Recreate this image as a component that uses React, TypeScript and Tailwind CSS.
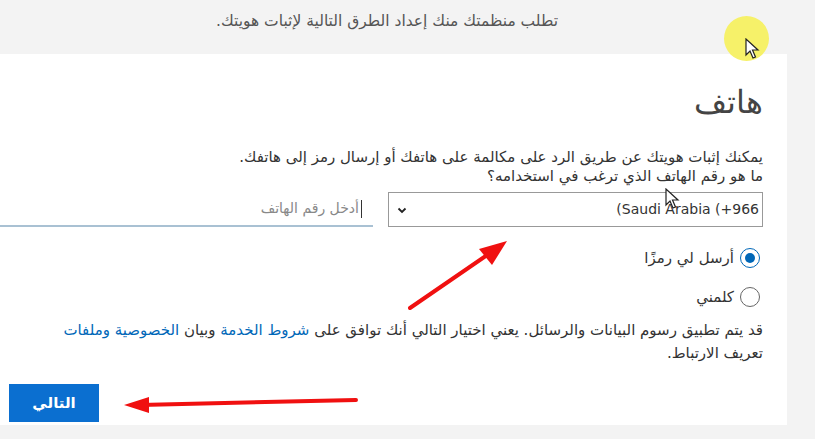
import React from "react";

const font = { fontFamily: '"DejaVu Sans", "Noto Sans", sans-serif' };

function Radio({ checked, label }: { checked?: boolean; label: string }) {
  return (
    <label className="flex items-center gap-[6px] h-[24px]">
      <span
        className={`flex items-center justify-center w-[20px] h-[20px] rounded-full border-[1.5px] ${
          checked ? "border-[#0067b8]" : "border-[#666]"
        } bg-white`}
      >
        {checked && <span className="w-[10px] h-[10px] rounded-full bg-[#0067b8]" />}
      </span>
      <span className="text-[15px] text-[#333]">{label}</span>
    </label>
  );
}

const Cursor = ({ className }: { className: string }) => (
  <svg className={className} width="16" height="22" viewBox="0 0 16 22">
    <path d="M1 1 L1 17 L5 13 L8 20 L10.5 19 L7.5 12 L13 12 Z" fill="white" stroke="#222" strokeWidth="1.2" />
  </svg>
);

export default function App() {
  return (
    <div className="relative w-[815px] h-[439px] overflow-hidden bg-[#f3f3f3]" style={font}>
      {/* top notice */}
      <div dir="rtl" className="h-[54px] pt-[10px] pr-[257px] text-[15.5px] text-[#555]">
        تطلب منظمتك منك إعداد الطرق التالية لإثبات هويتك.
      </div>

      <div className="flex">
        <div dir="rtl" className="w-[787px] h-[371px] bg-white pr-[24px] pt-[30px]">
          <h1 className="text-[32px] font-light text-[#444] leading-[36px]">هاتف</h1>

          <div className="mt-[28px] text-[15px] leading-[19px] text-[#333]">
            <p>يمكنك إثبات هويتك عن طريق الرد على مكالمة على هاتفك أو إرسال رمز إلى هاتفك.</p>
            <p>ما هو رقم الهاتف الذي ترغب في استخدامه؟</p>
          </div>

          <div className="flex items-center gap-[15px] mt-[6px]">
            <div className="w-[375px] h-[35px] border border-[#999] flex items-center justify-between pr-[3px] pl-[7px]">
              <span dir="ltr" className="text-[14px] text-[#333]">(Saudi Arabia (+966</span>
              <svg width="12" height="12" viewBox="0 0 12 12">
                <path d="M2.5 4.5 L6 8 L9.5 4.5" fill="none" stroke="#222" strokeWidth="1.8" />
              </svg>
            </div>
            <div className="flex-1 h-[35px] border-b-2 border-[#a9c1d3] flex items-center pr-[11px]">
              <span className="w-px h-[18px] bg-[#333] ml-[2px]" />
              <span className="text-[14px] text-[#888]">أدخل رقم الهاتف</span>
            </div>
          </div>

          <div className="mt-[19px] flex flex-col gap-[15px] pr-[3px]">
            <Radio checked label="أرسل لي رمزًا" />
            <Radio label="كلمني" />
          </div>

          <p className="mt-[10px] text-[15px] leading-[23px] text-[#333] pl-[30px]">
            قد يتم تطبيق رسوم البيانات والرسائل. يعني اختيار التالي أنك توافق على{" "}
            <span className="text-[#0067b8]">شروط الخدمة</span> وبيان{" "}
            <span className="text-[#0067b8]">الخصوصية وملفات</span> تعريف الارتباط.
          </p>

          <div className="flex justify-end pl-[9px] mt-[19px]">
            <button className="w-[90px] h-[38px] bg-[#0b6fd0] text-white text-[15px] font-bold">
              التالي
            </button>
          </div>
        </div>
      </div>

      {/* annotations */}
      <div className="absolute left-[724px] top-[16px] w-[45px] h-[45px] rounded-full bg-[#f6f169]" />
      <Cursor className="absolute left-[745px] top-[38px]" />
      <Cursor className="absolute left-[665px] top-[188px]" />
      <svg className="absolute left-0 top-0 pointer-events-none" width="815" height="439">
        <line x1="410" y1="308" x2="490" y2="253" stroke="#f01010" strokeWidth="4" strokeLinecap="round" />
        <polygon points="507,241 479,249 492,265" fill="#f01010" />
        <line x1="356" y1="400" x2="140" y2="405" stroke="#f01010" strokeWidth="4" strokeLinecap="round" />
        <polygon points="124,405 149,397 149,413" fill="#f01010" />
      </svg>
    </div>
  );
}
